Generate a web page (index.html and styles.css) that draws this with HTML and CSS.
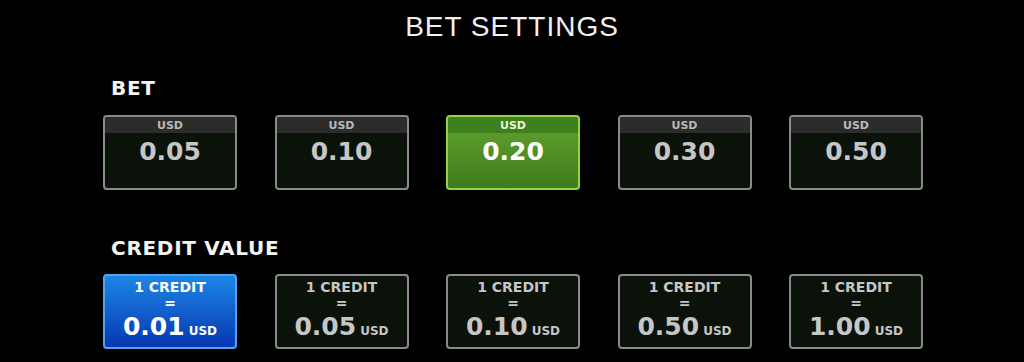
FILE: index.html
```html
<!DOCTYPE html>
<html>
<head>
<meta charset="utf-8">
<link rel="stylesheet" href="styles.css">
</head>
<body>
<div class="page">
  <h1 class="title">BET SETTINGS</h1>
  <section class="section">
    <h2 class="label">BET</h2>
    <div class="row">
      <div class="bet"><div class="bet-head">USD</div><div class="bet-val">0.05</div></div>
      <div class="bet"><div class="bet-head">USD</div><div class="bet-val">0.10</div></div>
      <div class="bet bet-active"><div class="bet-head">USD</div><div class="bet-val">0.20</div></div>
      <div class="bet"><div class="bet-head">USD</div><div class="bet-val">0.30</div></div>
      <div class="bet"><div class="bet-head">USD</div><div class="bet-val">0.50</div></div>
    </div>
  </section>
  <section class="section section-credit">
    <h2 class="label">CREDIT VALUE</h2>
    <div class="row">
      <div class="credit credit-active"><div class="cr-line">1 CREDIT</div><div class="cr-line">=</div><div class="cr-val"><span class="cr-num">0.01</span><span class="cr-cur">USD</span></div></div>
      <div class="credit"><div class="cr-line">1 CREDIT</div><div class="cr-line">=</div><div class="cr-val"><span class="cr-num">0.05</span><span class="cr-cur">USD</span></div></div>
      <div class="credit"><div class="cr-line">1 CREDIT</div><div class="cr-line">=</div><div class="cr-val"><span class="cr-num">0.10</span><span class="cr-cur">USD</span></div></div>
      <div class="credit"><div class="cr-line">1 CREDIT</div><div class="cr-line">=</div><div class="cr-val"><span class="cr-num">0.50</span><span class="cr-cur">USD</span></div></div>
      <div class="credit"><div class="cr-line">1 CREDIT</div><div class="cr-line">=</div><div class="cr-val"><span class="cr-num">1.00</span><span class="cr-cur">USD</span></div></div>
    </div>
  </section>
</div>
</body>
</html>
```

FILE: styles.css
```css
html, body {
  margin: 0;
  padding: 0;
  background: #000;
}
body {
  width: 1024px;
  height: 362px;
  overflow: hidden;
  font-family: "Liberation Sans", Arial, sans-serif;
  color: #fff;
}
.page {
  padding-top: 11px;
}
.title {
  margin: 0;
  font-size: 28px;
  line-height: 32px;
  font-weight: normal;
  letter-spacing: 1px;
  text-align: center;
  color: #f0f0f0;
}
.section {
  width: 820px;
  margin: 33px 0 0 103px;
}
.section-credit {
  margin-top: 46px;
}
.label {
  margin: 0 0 15px 8px;
  font-family: "DejaVu Sans", Verdana, sans-serif;
  font-size: 20px;
  line-height: 24px;
  font-weight: bold;
  letter-spacing: 0.7px;
  color: #f4f4f4;
}
.section-credit .label {
  margin-bottom: 14px;
}
.row {
  display: flex;
  justify-content: space-between;
}
.bet,
.credit {
  box-sizing: border-box;
  width: 134px;
  height: 75px;
  border: 2px solid #8a8a8a;
  border-radius: 4px;
  background: #0a120a;
  overflow: hidden;
  text-align: center;
  color: #c6c6c6;
  font-family: "DejaVu Sans", Verdana, sans-serif;
  font-weight: bold;
}
.bet-head {
  height: 16px;
  padding-top: 1px;
  box-sizing: border-box;
  background: #2c2c2c;
  font-size: 11px;
  line-height: 16px;
  color: #b8b8b8;
}
.bet-val {
  margin-top: 5px;
  font-size: 25px;
  line-height: 28px;
}
.bet-active {
  border-color: #93d34a;
  background: linear-gradient(#62a32f, #3f7c1d);
  color: #fff;
}
.bet-active .bet-head {
  background: #3e7f1e;
  color: #e6f3dc;
}
.credit {
  padding-top: 3px;
}
.cr-line {
  font-size: 14px;
  line-height: 16px;
}
.cr-val {
  margin-top: 3px;
  line-height: 26px;
}
.cr-num {
  font-size: 25px;
}
.cr-cur {
  margin-left: 4px;
  font-size: 12px;
}
.credit-active {
  border-color: #4ca6f2;
  background: linear-gradient(#1c86e4, #0737b3);
  color: #fff;
}
```
